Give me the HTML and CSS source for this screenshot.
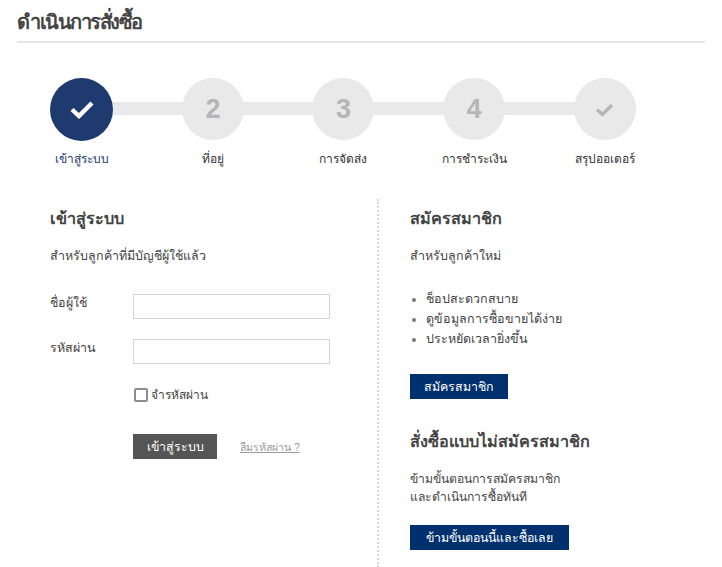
FILE: index.html
```html
<!DOCTYPE html>
<html lang="th">
<head>
    <meta charset="UTF-8">
    <meta name="viewport" content="width=device-width, initial-scale=1.0">
    <title>ดำเนินการสั่งซื้อ</title>
    <link rel="stylesheet" href="styles.css">
</head>
<body>
    <div class="container">
        <h1 class="page-title">ดำเนินการสั่งซื้อ</h1>

        <ol class="stepper">
            <li class="step active">
                <span class="step-circle">
                    <svg width="26" height="20" viewBox="0 0 26 20"><path d="M3 10.5l7 6.5L23 4" fill="none" stroke="#fff" stroke-width="4.4"/></svg>
                </span>
                <span class="step-label">เข้าสู่ระบบ</span>
            </li>
            <li class="step"><span class="step-circle">2</span><span class="step-label">ที่อยู่</span></li>
            <li class="step"><span class="step-circle">3</span><span class="step-label">การจัดส่ง</span></li>
            <li class="step"><span class="step-circle">4</span><span class="step-label">การชำระเงิน</span></li>
            <li class="step">
                <span class="step-circle">
                    <svg width="19" height="15" viewBox="0 0 19 15"><path d="M2 7.5l5.5 5L17 3" fill="none" stroke="#b5b5b5" stroke-width="3.2"/></svg>
                </span>
                <span class="step-label">สรุปออเดอร์</span>
            </li>
        </ol>

        <div class="columns">
            <section class="col col-login">
                <h2>เข้าสู่ระบบ</h2>
                <p class="intro">สำหรับลูกค้าที่มีบัญชีผู้ใช้แล้ว</p>
                <form class="login-form">
                    <div class="field">
                        <label for="username">ชื่อผู้ใช้</label>
                        <input id="username" type="text">
                    </div>
                    <div class="field">
                        <label for="password">รหัสผ่าน</label>
                        <input id="password" type="password">
                    </div>
                    <label class="remember"><span class="checkbox"></span>จำรหัสผ่าน</label>
                    <div class="actions">
                        <button type="button" class="btn btn-dark">เข้าสู่ระบบ</button>
                        <a href="#" class="forgot">ลืมรหัสผ่าน ?</a>
                    </div>
                </form>
            </section>

            <section class="col col-register">
                <h2>สมัครสมาชิก</h2>
                <p class="intro">สำหรับลูกค้าใหม่</p>
                <ul class="benefits">
                    <li>ช็อปสะดวกสบาย</li>
                    <li>ดูข้อมูลการซื้อขายได้ง่าย</li>
                    <li>ประหยัดเวลายิ่งขึ้น</li>
                </ul>
                <button type="button" class="btn btn-navy btn-register">สมัครสมาชิก</button>

                <h2 class="guest-title">สั่งซื้อแบบไม่สมัครสมาชิก</h2>
                <p class="guest-text">ข้ามขั้นตอนการสมัครสมาชิก<br>และดำเนินการซื้อทันที</p>
                <button type="button" class="btn btn-navy btn-skip">ข้ามขั้นตอนนี้และซื้อเลย</button>
            </section>
        </div>
    </div>
</body>
</html>
```

FILE: styles.css
```css
* {
    box-sizing: border-box;
}
html, body {
    height: 100%;
}
body {
    margin: 0;
    background: #fff;
    color: #444;
    font-family: "Liberation Sans", "Noto Sans", sans-serif;
    font-size: 12px;
    overflow: hidden;
}
.container {
    padding: 0 17px;
    height: 567px;
    display: flex;
    flex-direction: column;
}
.page-title {
    margin: 0;
    height: 43px;
    padding-top: 8px;
    border-bottom: 2px solid #e6e6e6;
    font-size: 20px;
    line-height: 28px;
    font-weight: 700;
    color: #444;
    letter-spacing: -1.5px;
}

/* stepper */
.stepper {
    list-style: none;
    margin: 35px 0 0;
    padding: 0;
    width: 653px;
    display: grid;
    grid-template-columns: repeat(5, 1fr);
}
.step {
    position: relative;
    display: flex;
    flex-direction: column;
    align-items: center;
}
.step:not(:last-child)::after {
    content: "";
    position: absolute;
    left: 50%;
    top: 24px;
    width: 100%;
    height: 13px;
    background: #e9e9e9;
}
.step-circle {
    position: relative;
    z-index: 1;
    width: 62px;
    height: 62px;
    border-radius: 50%;
    background: #e9e9e9;
    color: #b5b5b5;
    font-size: 27px;
    font-weight: 700;
    display: flex;
    align-items: center;
    justify-content: center;
}
.step.active .step-circle {
    width: 63px;
    height: 63px;
    margin: -0.5px 1px -0.5px 0;
    background: #1f3a6e;
}
.step-label {
    margin-top: 10px;
    line-height: 18px;
    color: #333;
}
.step.active .step-label {
    color: #1f3a6e;
}

/* columns */
.columns {
    flex: 1;
    display: flex;
    margin-top: 31px;
}
.col h2 {
    margin: 0;
    font-size: 16.2px;
    line-height: 24px;
    font-weight: 700;
    color: #444;
}
.intro {
    margin: 16px 0 0;
    font-size: 12.5px;
    line-height: 20px;
}
.col-login {
    width: 362px;
    padding: 7px 0 0 33px;
    border-right: 2px dotted #d8d8d8;
}
.col-register {
    padding: 7px 0 0 31px;
}

/* login form */
.login-form {
    margin-top: 28px;
}
.field {
    display: flex;
    align-items: flex-start;
    margin-bottom: 20px;
}
.field label {
    width: 83px;
    font-size: 12.5px;
    line-height: 18px;
}
.field input {
    width: 197px;
    height: 25px;
    border: 1px solid #d4d4d4;
    background: #fff;
    padding: 0 6px;
}
.remember {
    display: flex;
    align-items: center;
    margin: 24px 0 0 84px;
    line-height: 14px;
}
.checkbox {
    width: 14px;
    height: 14px;
    margin-right: 3px;
    border: 2px solid #8c8c96;
    border-radius: 2px;
}
.actions {
    display: flex;
    align-items: center;
    margin: 32px 0 0 83px;
}
.forgot {
    margin-left: 23px;
    padding-top: 2px;
    font-size: 10.6px;
    color: #9a9a9a;
}

/* buttons */
.btn {
    height: 25px;
    padding: 0;
    border: 0;
    color: #fff;
    font-family: inherit;
    font-size: 12.4px;
    cursor: pointer;
}
.btn-dark {
    width: 84px;
    background: #555;
}
.btn-navy {
    background: #00306e;
}
.btn-register {
    width: 98px;
}
.btn-skip {
    width: 159px;
}

/* right column */
.benefits {
    margin: 23px 0 25px;
    padding: 0 0 0 16px;
    font-size: 12.5px;
    line-height: 20px;
}
.benefits li::marker {
    color: #777;
}
.col .guest-title {
    margin-top: 30px;
}
.guest-text {
    margin: 17px 0 19px;
    font-size: 12.2px;
    line-height: 18px;
}
```
